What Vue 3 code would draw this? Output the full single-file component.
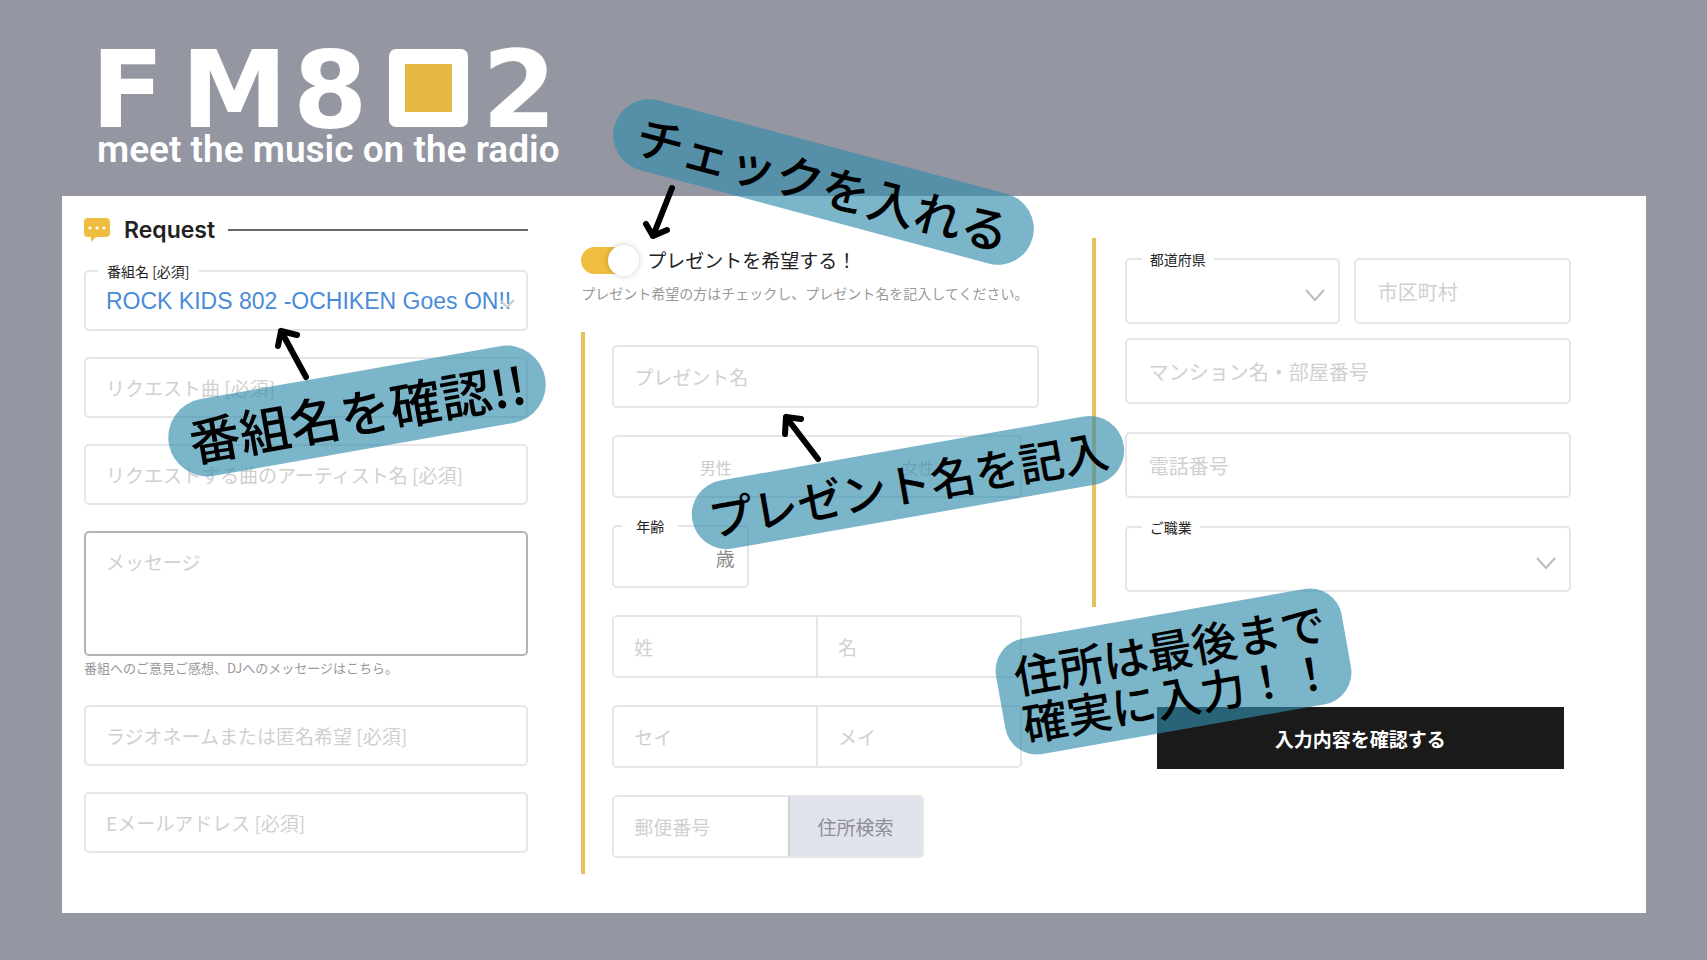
<script setup>
import { ref } from 'vue'

const wantsPresent = ref(true)
const program = ref('rock-kids')
const gender = ref('')
const prefecture = ref('')
const job = ref('')
</script>

<template>
  <div class="page">
    <header class="brand">
      <svg class="logo" width="468" height="80" viewBox="0 0 468 80" role="img" aria-label="FM802">
        <text class="logo-text" x="-6 84 196 385" y="78">FM82</text>
        <rect x="292" y="0" width="79" height="78" rx="7" fill="#fff" />
        <rect x="308" y="15" width="47" height="48" fill="#e6b844" />
      </svg>
      <p class="tagline">meet the music on the radio</p>
    </header>

    <form class="card" @submit.prevent>
      <section class="request">
        <div class="heading">
          <svg width="26" height="24" viewBox="0 0 26 24" aria-hidden="true">
            <path d="M4 0h18a4 4 0 0 1 4 4v11a4 4 0 0 1-4 4H12l-5 5v-5H4a4 4 0 0 1-4-4V4a4 4 0 0 1 4-4z" fill="#efbe41" />
            <g fill="#fff">
              <circle cx="6" cy="10" r="1.6" />
              <circle cx="13" cy="10" r="1.6" />
              <circle cx="20" cy="10" r="1.6" />
            </g>
          </svg>
          <h2>Request</h2>
          <span class="rule"></span>
        </div>

        <div class="field">
          <label class="notch" for="program">番組名 [必須]</label>
          <select id="program" v-model="program" class="control program">
            <option value="rock-kids">ROCK KIDS 802 -OCHIKEN Goes ON!!</option>
          </select>
          <svg class="chevron small" width="16" height="10" viewBox="0 0 16 10" aria-hidden="true">
            <path d="M1 1l7 7 7-7" />
          </svg>
        </div>
        <input class="control" type="text" aria-label="リクエスト曲" placeholder="リクエスト曲 [必須]" />
        <input class="control" type="text" aria-label="アーティスト名" placeholder="リクエストする曲のアーティスト名 [必須]" />
        <div class="message">
          <textarea class="control" aria-label="メッセージ" placeholder="メッセージ"></textarea>
          <p class="hint">番組へのご意見ご感想、DJへのメッセージはこちら。</p>
        </div>
        <input class="control" type="text" aria-label="ラジオネーム" placeholder="ラジオネームまたは匿名希望 [必須]" />
        <input class="control" type="email" aria-label="Eメールアドレス" placeholder="Eメールアドレス [必須]" />
      </section>

      <section class="present">
        <label class="toggle">
          <input v-model="wantsPresent" type="checkbox" />
          <span>プレゼントを希望する！</span>
        </label>
        <p class="hint wide">プレゼント希望の方はチェックし、プレゼント名を記入してください。</p>

        <div class="present-body">
          <input class="control" type="text" aria-label="プレゼント名" placeholder="プレゼント名" />
          <div class="group gender" role="radiogroup" aria-label="性別">
            <label><input v-model="gender" type="radio" name="gender" value="m" />男性</label>
            <label><input v-model="gender" type="radio" name="gender" value="f" />女性</label>
          </div>
          <div class="field age">
            <label class="notch" for="age">年齢</label>
            <input id="age" class="control" type="text" inputmode="numeric" />
            <span class="unit">歳</span>
          </div>
          <div class="group">
            <input type="text" aria-label="姓" placeholder="姓" />
            <input type="text" aria-label="名" placeholder="名" />
          </div>
          <div class="group">
            <input type="text" aria-label="セイ" placeholder="セイ" />
            <input type="text" aria-label="メイ" placeholder="メイ" />
          </div>
          <div class="group postal">
            <input type="text" aria-label="郵便番号" placeholder="郵便番号" />
            <button type="button">住所検索</button>
          </div>
        </div>
      </section>

      <section class="address">
        <div class="address-body">
          <div class="pair">
            <div class="field">
              <label class="notch" for="pref">都道府県</label>
              <select id="pref" v-model="prefecture" class="control">
                <option value=""></option>
              </select>
              <svg class="chevron" width="20" height="13" viewBox="0 0 20 13" aria-hidden="true">
                <path d="M1 1l9 10 9-10" />
              </svg>
            </div>
            <input class="control" type="text" aria-label="市区町村" placeholder="市区町村" />
          </div>
          <input class="control" type="text" aria-label="マンション名・部屋番号" placeholder="マンション名・部屋番号" />
          <input class="control spaced" type="tel" aria-label="電話番号" placeholder="電話番号" />
          <div class="field spaced">
            <label class="notch" for="job">ご職業</label>
            <select id="job" v-model="job" class="control">
              <option value=""></option>
            </select>
            <svg class="chevron" width="20" height="13" viewBox="0 0 20 13" aria-hidden="true">
              <path d="M1 1l9 10 9-10" />
            </svg>
          </div>
        </div>
        <button class="submit" type="submit">入力内容を確認する</button>
      </section>
    </form>

    <div class="note note-check">チェックを入れる</div>
    <div class="note note-program">番組名を確認!!</div>
    <div class="note note-present">プレゼント名を記入</div>
    <div class="note note-address">住所は最後まで<br />確実に入力！！</div>

    <svg class="arrow arrow-program" width="40" height="60" viewBox="0 0 40 60" aria-hidden="true">
      <path d="M35 52L10 6M7 21L10 6L26 10" />
    </svg>
    <svg class="arrow arrow-check" width="40" height="60" viewBox="0 0 40 60" aria-hidden="true">
      <path d="M32 5L13 53M6 41L13 53L27 47" />
    </svg>
    <svg class="arrow arrow-present" width="50" height="60" viewBox="0 0 50 60" aria-hidden="true">
      <path d="M38 49L6 7M5 24L6 7L21 9" />
    </svg>
  </div>
</template>

<style>
body {
  margin: 0;
  background: #9496a2;
}
</style>

<style scoped>
* {
  box-sizing: border-box;
}

.page {
  position: relative;
  min-height: 100vh;
  padding: 49px 61px 47px 62px;
  overflow: hidden;
  background: #9496a2;
  color: #222;
  font-family: "Noto Sans CJK JP", sans-serif;
}

input,
select,
textarea,
button {
  font-family: inherit;
  color: inherit;
}

p,
h2 {
  margin: 0;
}

.brand {
  height: 147px;
  padding-left: 35px;
  color: #fff;
}

.logo {
  display: block;
  overflow: visible;
}

.logo-text {
  fill: #fff;
  font-family: "DejaVu Sans", sans-serif;
  font-size: 107px;
  font-weight: 700;
}

.tagline {
  font-family: Roboto, sans-serif;
  font-size: 37px;
  font-weight: 600;
  line-height: 42px;
  white-space: nowrap;
}

.card {
  display: grid;
  grid-template-columns: minmax(0, 444fr) minmax(0, 457fr) minmax(0, 479fr);
  gap: 53px;
  padding: 0 75px 39px 22px;
  background: #fff;
}

.request {
  display: flex;
  flex-direction: column;
  gap: 26px;
  padding-top: 20px;
}

.heading {
  display: flex;
  align-items: center;
  height: 28px;
}

.heading h2 {
  margin: 0 13px 0 14px;
  font-family: Inter, sans-serif;
  font-size: 23px;
  font-weight: 600;
  line-height: 26px;
}

.rule {
  flex: 1;
  height: 2px;
  background: #666;
}

.field {
  position: relative;
}

.control {
  display: block;
  width: 100%;
  height: 61px;
  padding: 0 20px;
  border: 2px solid #e6e6e6;
  border-radius: 5px;
  outline: 0;
  background: #fff;
  font-size: 19px;
  appearance: none;
}

::placeholder {
  color: #d0d0d0;
  opacity: 1;
}

.control.program {
  padding-right: 0;
  color: #4a8bd8;
  font-family: "Liberation Sans", sans-serif;
  font-size: 23px;
}

.notch {
  position: absolute;
  top: -9px;
  left: 14px;
  padding: 0 9px;
  background: #fff;
  font-size: 14px;
  line-height: 20px;
}

.chevron {
  position: absolute;
  right: 15px;
  bottom: 22px;
  fill: none;
  stroke: #bbb;
  stroke-width: 2;
  pointer-events: none;
}

.chevron.small {
  right: 13px;
  stroke: #ccc;
}

.message .control {
  height: 125px;
  padding: 15px 20px;
  border-color: #b4b4b4;
  line-height: 28px;
  resize: none;
}

.hint {
  margin-top: 2px;
  color: #999;
  font-size: 13px;
  line-height: 20px;
  white-space: nowrap;
}

.message .hint {
  margin-bottom: 1px;
}

.hint.wide {
  margin-top: 8px;
  font-size: 14px;
}

.present {
  padding-top: 49px;
}

.toggle {
  display: flex;
  align-items: center;
  gap: 16px;
  height: 30px;
  font-size: 19px;
  line-height: 30px;
  white-space: nowrap;
}

.toggle input {
  position: relative;
  width: 50px;
  height: 27px;
  margin: 0;
  border-radius: 14px;
  background: #ccc;
  appearance: none;
}

.toggle input::before {
  position: absolute;
  top: -2px;
  left: -3px;
  width: 31px;
  height: 31px;
  border-radius: 50%;
  background: #fff;
  box-shadow: 0 0 6px rgba(0, 0, 0, 0.2);
  content: "";
}

.toggle input:checked {
  background: #efbe41;
}

.toggle input:checked::before {
  left: 27px;
}

.present-body {
  display: flex;
  flex-direction: column;
  gap: 27px;
  margin-top: 29px;
  padding: 13px 0 16px 27px;
  border-left: 4px solid #e5c25e;
}

.present-body .control {
  height: 63px;
}

.group {
  display: flex;
  width: 96%;
  height: 63px;
  overflow: hidden;
  border: 2px solid #e6e6e6;
  border-radius: 5px;
}

.group > input {
  flex: 1;
  min-width: 0;
  padding: 0 20px;
  border: 0;
  outline: 0;
  background: #fff;
  font-size: 19px;
}

.group > input + input {
  border-left: 2px solid #e6e6e6;
}

.gender label {
  position: relative;
  display: flex;
  flex: 1;
  align-items: center;
  justify-content: center;
  color: #ccc;
  font-size: 16px;
}

.gender input {
  position: absolute;
  inset: 0;
  margin: 0;
  opacity: 0;
}

.age {
  width: 32%;
}

.age .notch {
  left: 10px;
  padding: 0 14px;
}

.unit {
  position: absolute;
  right: 14px;
  bottom: 16px;
  color: #8c8c8c;
  font-size: 19px;
  line-height: 28px;
}

.group.postal {
  width: 73%;
}

.postal button {
  width: 136px;
  margin: -2px;
  border: 2px solid #cfd0d6;
  border-radius: 0 5px 5px 0;
  background: #e1e3ec;
  color: #8e8e93;
  font-size: 19px;
}

.address {
  padding-top: 42px;
}

.address-body {
  padding: 20px 0 15px 29px;
  border-left: 4px solid #e5c25e;
}

.address .control {
  height: 66px;
  padding: 0 22px;
  font-size: 20px;
}

.address .notch {
  left: 17px;
  padding: 0 8px;
}

.pair {
  display: grid;
  grid-template-columns: minmax(0, 215fr) minmax(0, 217fr);
  gap: 14px;
  margin-bottom: 14px;
}

.spaced {
  margin-top: 28px;
}

.submit {
  display: block;
  width: calc(100% - 72px);
  height: 62px;
  margin: 100px 7px 0 65px;
  border: 0;
  background: #1a1a1a;
  color: #fff;
  font-size: 19px;
  font-weight: 700;
}

.note {
  position: absolute;
  display: flex;
  align-items: center;
  justify-content: center;
  border-radius: 39px;
  background: rgba(49, 140, 171, 0.645);
  color: #000;
  font-weight: 500;
  white-space: nowrap;
}

.note-check {
  top: 146px;
  left: 607px;
  width: 433px;
  height: 72px;
  font-size: 48px;
  transform: rotate(15deg);
}

.note-program {
  top: 372px;
  left: 166px;
  width: 382px;
  height: 78px;
  font-size: 51px;
  transform: rotate(-10deg);
}

.note-present {
  top: 448px;
  left: 689px;
  width: 438px;
  height: 69px;
  font-size: 45px;
  transform: rotate(-10deg);
}

.note-address {
  top: 613px;
  left: 998px;
  width: 351px;
  height: 117px;
  border-radius: 32px;
  font-size: 45px;
  line-height: 48px;
  transform: rotate(-10deg);
}

.arrow {
  position: absolute;
  fill: none;
  stroke: #000;
  stroke-width: 6;
  stroke-linecap: round;
  stroke-linejoin: round;
}

.arrow-program {
  top: 325px;
  left: 271px;
}

.arrow-check {
  top: 183px;
  left: 640px;
}

.arrow-present {
  top: 410px;
  left: 780px;
}
</style>
